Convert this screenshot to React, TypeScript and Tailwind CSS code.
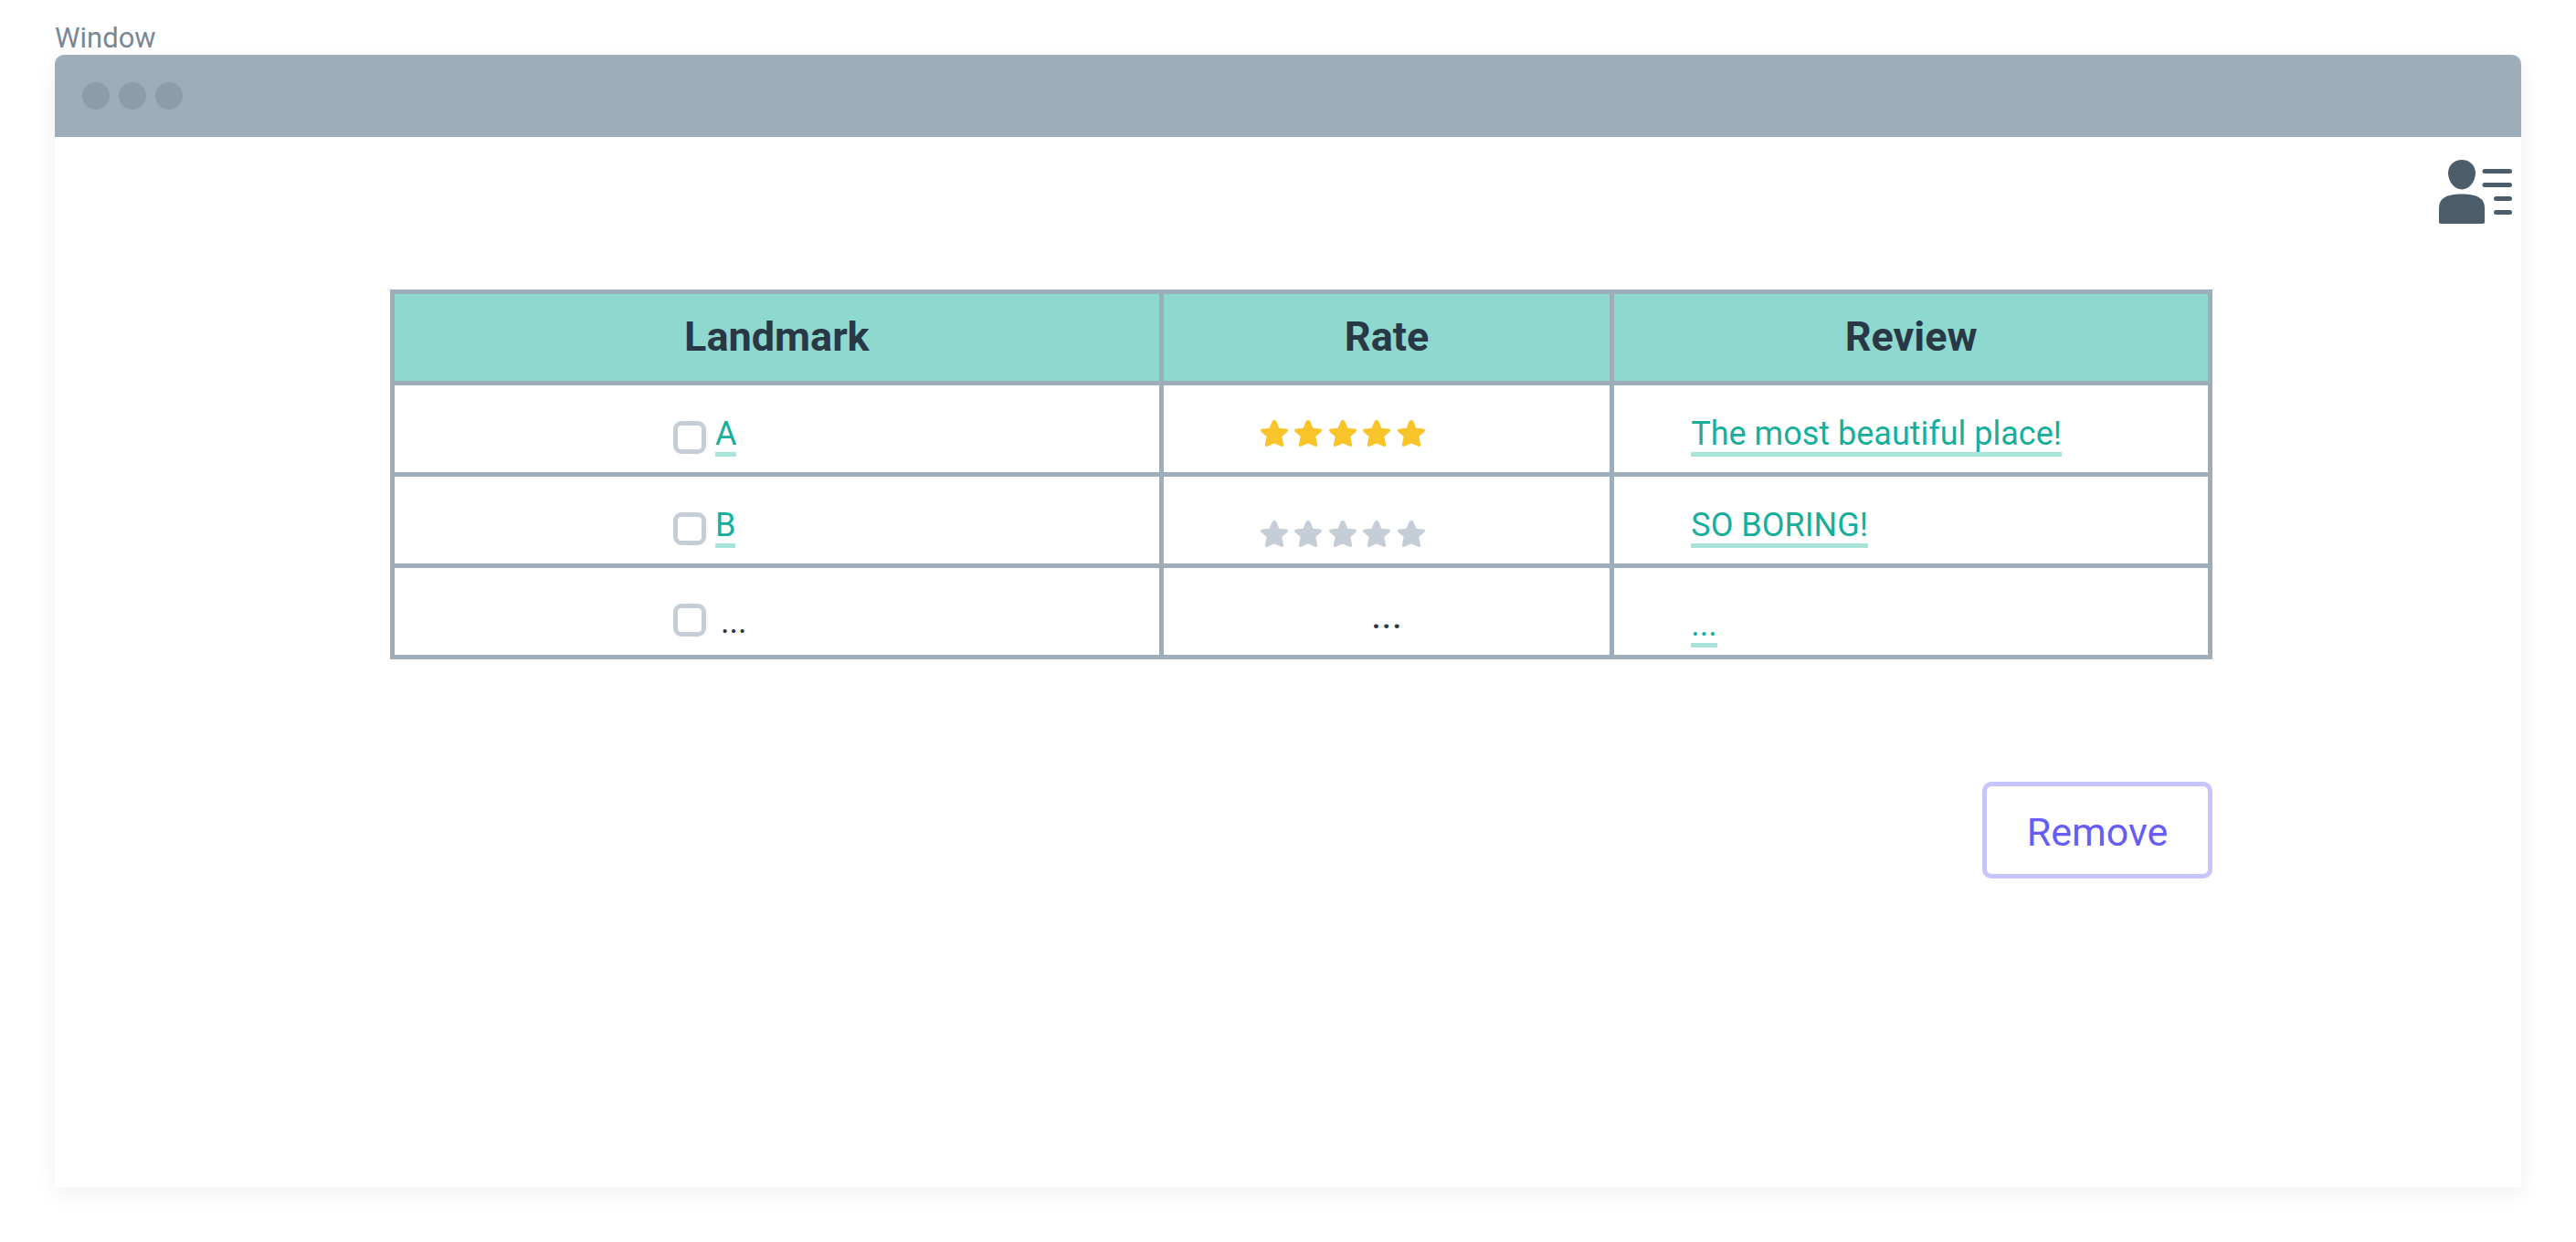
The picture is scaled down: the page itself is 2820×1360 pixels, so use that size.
import React from "react";

const STAR =
  "M15 0c1.3 0 2.2.8 2.7 2.2l2.6 6.6 7.6.8c1.4.2 2.1.8 2.1 1.7 0 .7-.4 1.3-1.1 1.9l-5.6 4.9 1.8 8.6c.3 1.700-.9 2.700-2.400 2L15 25.600l-7.700 3.100c-1.500.7-2.700-.3-2.400-2l1.800-8.600-5.600-4.900C.4 12.600 0 12 0 11.300c0-.9.7-1.500 2.100-1.700l7.600-.8 2.600-6.600C12.800.8 13.700 0 15 0z";

function Stars({ label, className }: { label: string; className: string }) {
  return (
    <div role="img" aria-label={label} className={`flex w-[180px] justify-between ${className}`}>
      {[0, 1, 2, 3, 4].map((i) => (
        <svg key={i} viewBox="0 0 30 29" className="h-[29px] w-[30px]" fill="currentColor">
          <path d={STAR} />
        </svg>
      ))}
    </div>
  );
}

function TextLink({ children }: { children: React.ReactNode }) {
  return (
    <a
      href="#"
      className="block border-b-5 border-[#a9e4db] text-[36px] leading-10 text-[#18ae9c]"
    >
      {children}
    </a>
  );
}

function Landmark({ label, children }: { label: string; children: React.ReactNode }) {
  return (
    <div className="flex items-start pt-[39px] pl-[305px]">
      <input
        type="checkbox"
        aria-label={label}
        className="size-9 shrink-0 appearance-none rounded-[9px] border-5 border-[#c5ced7] bg-white checked:bg-[#c5ced7]"
      />
      {children}
    </div>
  );
}

function ProfileIcon() {
  return (
    <svg viewBox="0 0 80 70" className="h-[70px] w-20" fill="#4b5d6b">
      <path d="M25 0c8.500 0 15 6.200 15 14.500C40 23.500 33 32.500 25 32.500S10 23.500 10 14.500C10 6.200 16.500 0 25 0z" />
      <path d="M0 53c0-11 8-15.500 25-15.500S50 42 50 53v15c0 1.300-.7 2-2 2H2c-1.300 0-2-.7-2-2z" />
      <rect x="47.500" y="10" width="32.500" height="5" rx="2.500" />
      <rect x="47.500" y="25" width="32.500" height="5" rx="2.500" />
      <rect x="60" y="40" width="20" height="5" rx="2.500" />
      <rect x="60" y="55" width="20" height="5" rx="2.500" />
    </svg>
  );
}

const CELL = "h-[100px] border-5 border-[#9eadba] p-0 align-top";
const HEAD = "h-[100px] border-5 border-[#9eadba] p-0 pb-0.5 align-middle text-[45px] leading-[50px] font-bold";

export default function App() {
  return (
    <div className="flex min-h-screen flex-col bg-white px-[60px] pt-6 pb-[60px] font-[Roboto,sans-serif] text-[#293845]">
      <p className="text-[31px] leading-9 text-[#788896]">Window</p>
      <section className="flex flex-1 flex-col rounded-t-[10px] bg-white shadow-[0_6px_24px_rgba(0,0,0,0.065)]">
        <header className="flex h-[90px] items-center gap-2.5 rounded-t-[10px] bg-[#9eadba] px-[30px]">
          <span className="size-[30px] rounded-full bg-[#8d9cab]" />
          <span className="size-[30px] rounded-full bg-[#8d9cab]" />
          <span className="size-[30px] rounded-full bg-[#8d9cab]" />
        </header>
        <div className="flex justify-end pt-[25px] pr-2.5">
          <button type="button" aria-label="Profile" className="block">
            <ProfileIcon />
          </button>
        </div>
        <main className="flex flex-col items-end pt-[72px] pr-[338px] pl-[367px]">
          <table className="w-full table-fixed border-collapse">
            <colgroup>
              <col className="w-[42.3%]" />
              <col className="w-[24.8%]" />
              <col className="w-[32.9%]" />
            </colgroup>
            <thead className="bg-[#8fd8ce]">
              <tr>
                <th scope="col" className={HEAD}>Landmark</th>
                <th scope="col" className={HEAD}>Rate</th>
                <th scope="col" className={HEAD}>Review</th>
              </tr>
            </thead>
            <tbody>
              <tr>
                <td className={CELL}>
                  <Landmark label="Select A">
                    <div className="-mt-1.5 ml-2.5"><TextLink>A</TextLink></div>
                  </Landmark>
                </td>
                <td className={CELL}>
                  <div className="pt-[38px] pl-[106px]">
                    <Stars label="5 of 5 stars" className="text-[#f8c429]" />
                  </div>
                </td>
                <td className={CELL}>
                  <div className="flex pt-[33px] pl-[84px]"><TextLink>The most beautiful place!</TextLink></div>
                </td>
              </tr>
              <tr>
                <td className={CELL}>
                  <Landmark label="Select B">
                    <div className="-mt-1.5 ml-2.5"><TextLink>B</TextLink></div>
                  </Landmark>
                </td>
                <td className={CELL}>
                  <div className="pt-12 pl-[106px]">
                    <Stars label="0 of 5 stars" className="text-[#c5ced7]" />
                  </div>
                </td>
                <td className={CELL}>
                  <div className="flex pt-[33px] pl-[84px]"><TextLink>SO BORING!</TextLink></div>
                </td>
              </tr>
              <tr>
                <td className={CELL}>
                  <Landmark label="Select ...">
                    <span className="ml-4 text-[36px] leading-10">...</span>
                  </Landmark>
                </td>
                <td className={CELL}>
                  <div className="pt-[26px] text-center text-[43px] leading-[50px]">...</div>
                </td>
                <td className={CELL}>
                  <div className="flex pt-[42px] pl-[84px]"><TextLink>...</TextLink></div>
                </td>
              </tr>
            </tbody>
          </table>
          <button
            type="button"
            className="mt-[134px] h-[106px] w-[252px] rounded-[10px] border-5 border-[#c8c4fc] pt-1 text-[43px] leading-[50px] text-[#675df6]"
          >
            Remove
          </button>
        </main>
      </section>
    </div>
  );
}
